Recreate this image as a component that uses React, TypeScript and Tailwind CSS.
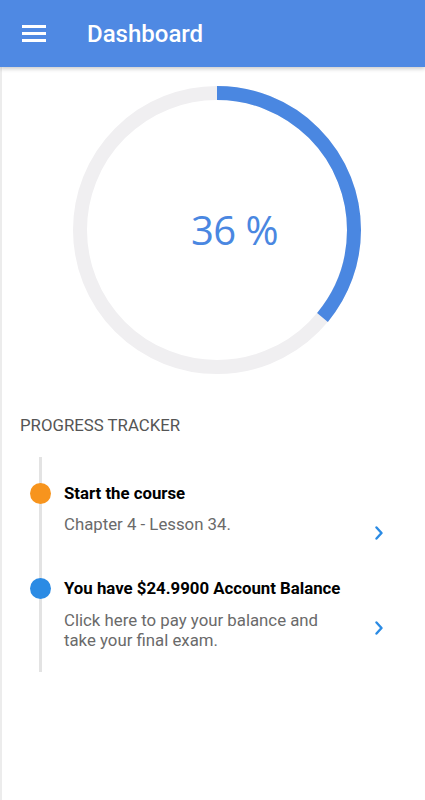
import React from 'react';

interface Step {
  title: string;
  lines: string;
  color: string;
}

const steps: Step[] = [
  { title: 'Start the course', lines: 'Chapter 4 - Lesson 34.', color: 'bg-[#f7941d]' },
  {
    title: 'You have $24.9900 Account Balance',
    lines: 'Click here to pay your balance and take your final exam.',
    color: 'bg-[#2b8be4]',
  },
];

const ProgressRing: React.FC<{ percent: number }> = ({ percent }) => {
  const r = 137;
  const circ = 2 * Math.PI * r;
  const dash = (percent / 100) * circ;
  return (
    <div className="relative w-[288px] h-[288px]">
      <svg width="288" height="288" viewBox="0 0 288 288" className="-rotate-90">
        <circle cx="144" cy="144" r={r} fill="none" stroke="#f0eff1" strokeWidth="14" />
        <circle
          cx="144"
          cy="144"
          r={r}
          fill="none"
          stroke="#4a87e1"
          strokeWidth="14"
          strokeDasharray={`${dash} ${circ}`}
        />
      </svg>
      <div className="absolute inset-0 flex items-center justify-center pl-[36px]">
        <span className="text-[40px] text-[#4a87e1] font-['Open_Sans',sans-serif] tracking-[-0.5px]">
          36 %
        </span>
      </div>
    </div>
  );
};

const App: React.FC = () => {
  return (
    <div className="min-h-[800px] bg-white font-['Roboto',sans-serif]">
      {/* Top bar */}
      <header className="h-[67px] bg-[#4f89e3] flex items-center shadow-[0_2px_4px_rgba(0,0,0,0.2)] relative z-10">
        <button className="ml-[22px] w-6 flex flex-col gap-[4.5px]">
          <span className="block h-[2.5px] w-6 bg-white" />
          <span className="block h-[2.5px] w-6 bg-white" />
          <span className="block h-[2.5px] w-6 bg-white" />
        </button>
        <h1 className="ml-[41px] text-[24px] font-medium text-white leading-none pt-[1px]">Dashboard</h1>
      </header>

      <div className="border-l-2 border-[#ececec] min-h-[733px]">
        {/* Progress circle */}
        <div className="flex justify-center pt-[19px] pl-[6px]">
          <ProgressRing percent={36} />
        </div>

        <h2 className="mt-[39px] ml-[18px] text-[16.8px] text-[#555] leading-[24px]">PROGRESS TRACKER</h2>

        {/* Timeline */}
        <div className="mt-[20px] ml-[37px] border-l-[3px] border-[#e3e3e3] pt-[24px] pb-[22px] pl-[22px] pr-[41px] flex flex-col gap-[36px]">
          {steps.map((step, i) => (
            <div key={i} className="relative">
              <span className={`absolute -left-[34px] top-[1.5px] w-[21px] h-[21px] rounded-full ${step.color}`} />
              <h3 className="text-[16.8px] font-bold text-black leading-[24px]">{step.title}</h3>
              <div className={`flex items-start justify-between ${i === 0 ? 'mt-[7px]' : 'mt-[10px]'}`}>
                <p
                  className={`text-[16.8px] text-[#6a6a6a] w-[272px] ${
                    i === 0 ? 'leading-[24px]' : 'leading-[20px]'
                  }`}
                >
                  {step.lines}
                </p>
                <svg width="10" height="14" viewBox="0 0 10 14" className={i === 0 ? 'mt-[14px]' : 'mt-[11px]'}>
                  <path d="M2.5 1.5 L7.5 7 L2.5 12.5" fill="none" stroke="#2b8be4" strokeWidth="2.4" strokeLinecap="round" strokeLinejoin="round" />
                </svg>
              </div>
            </div>
          ))}
        </div>
      </div>
    </div>
  );
};

export default App;
